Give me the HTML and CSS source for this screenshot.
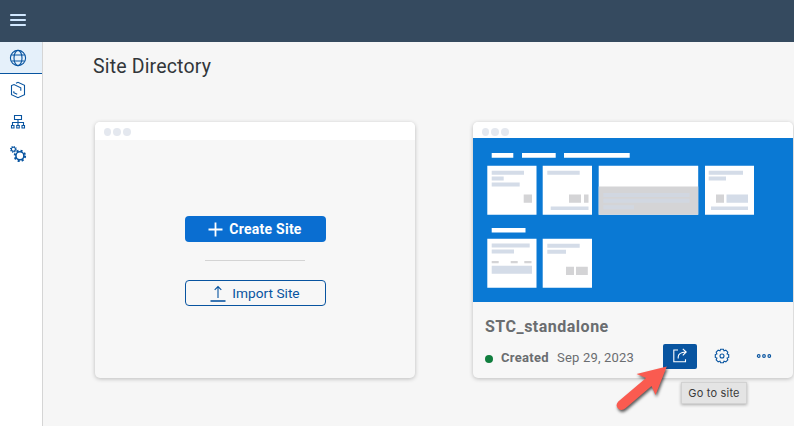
FILE: index.html
```html
<!DOCTYPE html>
<html lang="en">
<head>
<meta charset="utf-8">
<title>Site Directory</title>
<link rel="stylesheet" href="styles.css">
</head>
<body>
<header class="topbar">
  <svg class="menu" width="16" height="12" viewBox="0 0 16 12"><path d="M.9 1h14.2M.9 6h14.2M.9 11h14.2"/></svg>
</header>
<div class="shell">
  <nav class="side">
    <a class="item active"><svg width="18" height="18" viewBox="0 0 18 18"><circle cx="9" cy="9" r="7.6"/><ellipse cx="9" cy="9" rx="4" ry="7.6"/><path d="M2.3 6h13.4M2.3 12h13.4"/></svg></a>
    <a class="item"><svg width="18" height="18" viewBox="0 0 18 18"><path d="M7 2.200 9 1.300l6.500 3v9.400L9 16.700l-6.500-3V4.600L5 3.600l6.800 3.200v3M4.800 10.200v1.500l3.400 1.600"/></svg></a>
    <a class="item"><svg width="18" height="18" viewBox="0 0 18 18"><path d="M5.500 2.500h7v4h-7zM9 6.500V12M3.500 12V9.500h11V12M2.500 12.500h2.500v2.500H2.500zM7.750 12.500h2.500v2.500h-2.500zM13 12.500h2.500v2.500H13z"/></svg></a>
    <a class="item"><svg width="18" height="18" viewBox="0 0 18 18"><circle cx="4.400" cy="4.300" r="2"/><circle class="teeth small" cx="4.400" cy="4.300" r="2.800"/><circle class="rim" cx="10.900" cy="10.800" r="4"/><circle class="teeth" cx="10.900" cy="10.800" r="5.200"/></svg></a>
  </nav>
  <main class="content">
    <h1>Site Directory</h1>
    <div class="cards">
      <section class="card">
        <div class="dots"><i></i><i></i><i></i></div>
        <div class="actions">
          <button class="btn primary"><svg width="15" height="15" viewBox="0 0 15 15"><path d="M7.500 .5v14M.5 7.500h14"/></svg><span class="create">Create Site</span></button>
          <div class="rule"></div>
          <button class="btn outline"><svg width="16" height="17" viewBox="0 0 16 17"><path d="M8 13V1.500M4.700 4.800 8 1.500l3.300 3.300"/><path class="base" d="M.5 16h15"/></svg><span class="import">Import Site</span></button>
        </div>
      </section>
      <section class="card">
        <div class="dots"><i></i><i></i><i></i></div>
        <svg class="preview" width="320" height="163.500" viewBox="473 138.300 320 163.500">
          <g fill="#fff">
            <path d="M491.700 153.300h21.600v4.800h-21.600zM522 153.300h33.700v4.800H522zM564 153.300h65.700v4.800H564zM491.700 228.300h33.800v4.500h-33.800z"/>
            <path d="M487.300 166h49.200v49h-49.200zM542.700 166H592v49h-49.300zM598.700 166h99.500v49h-99.500zM705 166h49v49h-49zM487.300 239h49.200v49h-49.200zM542.700 239H592v49h-49.300z"/>
          </g>
          <path fill="#d4d4d6" d="M598.700 186.800h99.500V215h-99.500zM523.700 194.800h8.300v8.200h-8.300zM569 194.800h12v8.200h-12zM584 194.800h4.500v8.200H584zM716 194.800h8v8.200h-8zM491.700 261.300h7v2.200h-7zM510.700 261.300h7v2.200h-7zM524.300 261.300h7.200v2.200h-7.200zM566 267h8v8.200h-8zM576 267h11.800v8.200H576z"/>
          <path fill="#d4dce8" d="M491.700 171H524v4h-32.300zM491.700 176.800h12v4h-12zM491.700 182.800h28v4h-28zM547.300 171h32.400v4h-32.400zM550.700 206.700h37.800v3.500h-37.800zM708.700 171H743v4h-34.300zM708.700 176.800H726v4h-17.300zM726.500 194.800H748v8.200h-21.500zM711 206.700h37v3.500h-37zM491.700 243.700h38v4h-38zM491.700 249.800H514v4h-22.300zM491.700 266H532v8h-40.300zM547.300 244h32.400v4h-32.400zM547.300 250H566v4h-18.700z"/>
          <path fill="#d1d7e1" d="M603.300 193.300h86.200v4h-86.200zM603.300 199h86.200v4h-86.200zM603.300 205.500H634v4h-30.700z"/>
        </svg>
        <div class="info">
          <h2>STC_standalone</h2>
          <div class="meta">
            <b class="status"></b><strong>Created</strong><span class="date">Sep 29, 2023</span>
            <div class="tools">
              <button class="tool go"><svg width="16" height="16" viewBox="0 0 16 16"><path d="M6 2H1.800v11.700h11.700v-2.500M6.200 10.500V9q0-4.500 7.500-5M10.800 .8l3.400 3.200-3.400 3.300"/></svg>
                <svg class="arrow" width="56" height="52" viewBox="0 0 56 52"><path d="M51.800 3.500 21.500 11l9.500 4L3.300 38.500q-3.500 4 0 7.200 3.300 3 7.200-.4L36.500 23l4 9z"/></svg>
              </button>
              <button class="tool"><svg width="16" height="16" viewBox="0 0 16 16"><path d="M6.600 1.300h2.800l.6 1.600 1.800-.7 2 2-.7 1.800 1.600.6v2.800l-1.600.6.7 1.800-2 2-1.800-.7-.6 1.600H6.600L6 13.100l-1.800.7-2-2 .7-1.800-1.600-.6V6.600L2.900 6l-.7-1.800 2-2 1.800.7z"/><circle cx="8" cy="8" r="2"/></svg></button>
              <button class="tool"><svg width="16" height="16" viewBox="0 0 16 16"><circle cx="2.700" cy="8" r="1.350"/><circle cx="8" cy="8" r="1.350"/><circle cx="13.300" cy="8" r="1.350"/></svg></button>
              <span class="tip">Go to site</span>
            </div>
          </div>
        </div>
      </section>
    </div>
  </main>
</div>
</body>
</html>
```
FILE: styles.css
```css
* { box-sizing: border-box; }
body { margin: 0; height: 426px; overflow: hidden; display: flex; flex-direction: column; background: #f6f6f6; font-family: Roboto, "Noto Sans", sans-serif; }
svg { display: block; fill: none; flex: none; }
button { font: inherit; border: 0; padding: 0; background: none; }
.topbar { height: 42px; flex: none; background: #354a5f; padding: 14px 10px; }
.menu { stroke: #d1e8ff; stroke-width: 2; stroke-linecap: round; }
.shell { flex: 1; display: flex; min-height: 0; }
.side { width: 43px; flex: none; background: #fff; border-right: 1px solid #d5d5d5; }
.item { height: 32px; display: flex; padding: 7px 0 0 9px; stroke: #0854a0; stroke-width: 1.1; }
.item.active { background: #e5f0fa; border-bottom: 1px solid #0854a0; }
.rim { stroke-width: 1.6; }
.teeth { stroke-width: 2; stroke-dasharray: 2.040 2.044; }
.teeth.small { stroke-width: 1.200; stroke-dasharray: 1.100 1.100; }
.content { padding: 13px 0 0 52px; }
h1 { margin: 0 0 0 -2px; font-size: 19.500px; line-height: 24px; font-weight: 400; color: #32363a; letter-spacing: .17px; }
.cards { display: flex; gap: 58px; margin-top: 43px; }
.card { width: 320px; height: 256px; flex: none; border-radius: 5px; background: #f7f7f7; box-shadow: 0 1px 4px rgba(0,0,0,.24); }
.dots { height: 18px; background: #fff; border-radius: 5px 5px 0 0; display: flex; gap: 2px; padding: 6px 0 0 8.500px; }
.dots + svg { margin-top: -1.700px; }
.dots i { width: 7.700px; height: 8px; border-radius: 50%; background: #e4e8ef; }
.actions { width: 141px; margin: 76px auto 0; display: flex; flex-direction: column; align-items: center; }
.btn { width: 141px; height: 26px; border-radius: 4px; display: flex; align-items: center; justify-content: center; gap: 6px; font-size: 14px; }
.primary { background: #0a6ed1; color: #fff; font-weight: 700; letter-spacing: .25px; stroke: #fff; stroke-width: 1.800; }
.outline { border: 1px solid #0854a0; color: #0854a0; font-size: 13.700px; stroke: #0854a0; stroke-width: 1.100; }
.btn span { stroke: none; }
.base { stroke-width: 1.600; }
.rule { width: 100px; height: 1px; background: #d4d4d4; margin: 18px 0 19px; }
.preview { background: #0a79d4; }
.info { padding: 15px 0 0 12px; }
h2 { margin: 0; font-size: 16px; line-height: 20px; font-weight: 700; letter-spacing: .5px; color: #6a6d70; }
.meta { display: flex; align-items: center; height: 26px; margin-top: 8px; font-size: 13px; color: #6a6d70; }
.meta strong { letter-spacing: .3px; }
.status { width: 8px; height: 8px; border-radius: 50%; background: #107e3e; margin: 2px 8px 0 0; }
.date { margin-left: 8px; letter-spacing: .2px; }
.tools { position: relative; display: flex; gap: 8px; margin: -3px 12px 0 auto; }
.tool { width: 34px; height: 25px; display: flex; align-items: center; justify-content: center; stroke: #0854a0; stroke-width: 1.100; }
.go { position: relative; background: #0854a0; border-radius: 2px; stroke: #fff; }
.arrow { position: absolute; left: -48px; top: 19px; overflow: visible; fill: #fa5b50; stroke: none; filter: drop-shadow(1px 2px 1.500px rgba(0,0,0,.65)); }
.tip { position: absolute; left: 18px; top: 38px; width: 66px; height: 22px; text-align: center; font: 11px/20px Inter, sans-serif; letter-spacing: .2px; color: #3b3b3b; background: #e4e4e4; border: 1px solid #d2d2d2; box-shadow: 0 1px 3px rgba(0,0,0,.3); }
```
